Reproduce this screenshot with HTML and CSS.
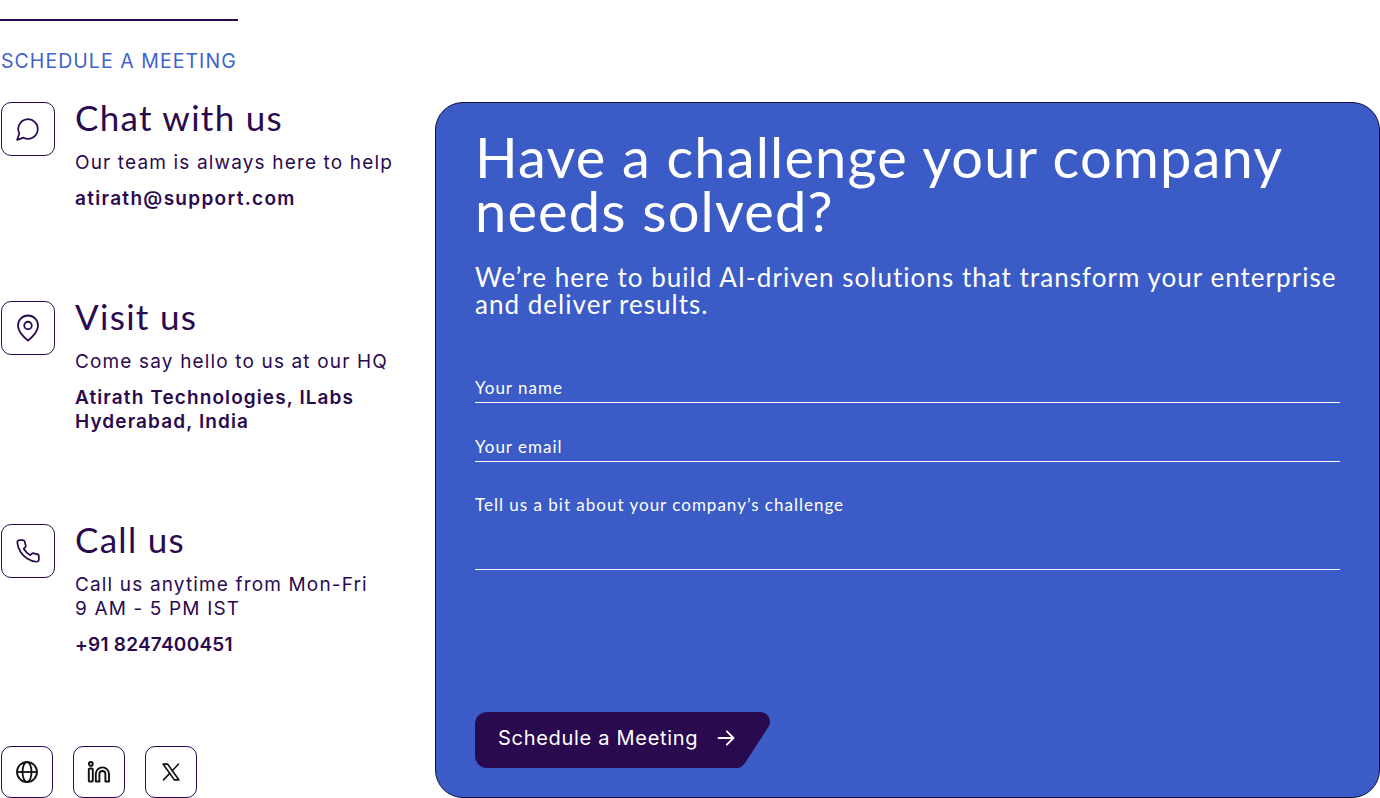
FILE: index.html

```html
<!DOCTYPE html>
<html lang="en">
<head>
  <meta charset="UTF-8">
  <title>Schedule a Meeting</title>
  <meta name="viewport" content="width=device-width, initial-scale=1.0">
  <link rel="stylesheet" href="styles.css">
</head>
<body>
  <div class="page">

    <!-- Kontaktspalte -->
    <aside class="contact">
      <div class="rule"></div>
      <div class="eyebrow">SCHEDULE A MEETING</div>

      <div class="contact-list">
        <div class="contact-row">
          <div class="icon-box">
            <svg width="26" height="26" viewBox="0 0 24 24" fill="none" stroke="#2a0a4f" stroke-width="1.6" stroke-linecap="round" stroke-linejoin="round"><path d="M7.9 20A9 9 0 1 0 4 16.1L2 22Z"/></svg>
          </div>
          <div class="contact-text">
            <h2>Chat with us</h2>
            <p>Our team is always here to help</p>
            <p class="strong email">atirath@support.com</p>
          </div>
        </div>

        <div class="contact-row">
          <div class="icon-box">
            <svg width="30" height="30" viewBox="0 0 24 24" fill="none" stroke="#2a0a4f" stroke-width="1.45" stroke-linecap="round" stroke-linejoin="round"><path d="M20 10c0 6-8 12-8 12s-8-6-8-12a8 8 0 0 1 16 0Z"/><circle cx="12" cy="10" r="3"/></svg>
          </div>
          <div class="contact-text">
            <h2>Visit us</h2>
            <p>Come say hello to us at our HQ</p>
            <p class="strong">Atirath Technologies, ILabs<br>Hyderabad, India</p>
          </div>
        </div>

        <div class="contact-row">
          <div class="icon-box">
            <svg width="26" height="26" viewBox="0 0 24 24" fill="none" stroke="#2a0a4f" stroke-width="1.6" stroke-linecap="round" stroke-linejoin="round"><path d="M22 16.92v3a2 2 0 0 1-2.18 2 19.79 19.79 0 0 1-8.63-3.07 19.5 19.5 0 0 1-6-6 19.79 19.79 0 0 1-3.07-8.67A2 2 0 0 1 4.11 2h3a2 2 0 0 1 2 1.72 12.84 12.84 0 0 0 .7 2.81 2 2 0 0 1-.45 2.11L8.09 9.91a16 16 0 0 0 6 6l1.27-1.27a2 2 0 0 1 2.11-.45 12.84 12.84 0 0 0 2.81.7A2 2 0 0 1 22 16.92z"/></svg>
          </div>
          <div class="contact-text">
            <h2>Call us</h2>
            <p>Call us anytime from Mon-Fri<br>9 AM - 5 PM IST</p>
            <p class="strong phone">+91 8247400451</p>
          </div>
        </div>
      </div>

      <div class="socials">
        <div class="social-box">
          <svg width="24" height="24" viewBox="0 0 24 24" fill="none" stroke="#111" stroke-width="1.8"><circle cx="12" cy="12" r="10"/><ellipse cx="12" cy="12" rx="4.5" ry="10"/><path d="M2 12h20"/></svg>
        </div>
        <div class="social-box">
          <svg width="24" height="24" viewBox="0 0 24 24" fill="none" stroke="#111" stroke-width="1.9" stroke-linejoin="round"><circle cx="3.8" cy="3.9" r="1.9"/><rect x="1.8" y="8.5" width="4" height="13" rx="1"/><path d="M8.8 21.5V14a6.6 6.6 0 0 1 13.2 0v7.5h-3.6V14a3 3 0 0 0-6 0v7.5z"/></svg>
        </div>
        <div class="social-box">
          <svg width="20" height="20" viewBox="0 0 24 24" fill="none" stroke="#111" stroke-width="1.9" stroke-linejoin="round"><path d="M2.5 2.5h5.4l13.6 19h-5.4z"/><path d="M21 2.5 13.5 10.6M10.5 13.6 3 21.5" stroke-linecap="round"/></svg>
        </div>
      </div>
    </aside>

    <!-- Formular -->
    <main class="panel">
      <h1>Have a challenge your company needs solved?</h1>
      <p class="lead">We’re here to build AI-driven solutions that transform your enterprise and deliver results.</p>

      <div class="form">
        <div class="field">Your name</div>
        <div class="field">Your email</div>
        <div class="field field-long">Tell us a bit about your company’s challenge</div>
      </div>

      <button class="btn">
        Schedule a Meeting
        <svg width="20" height="20" viewBox="0 0 24 24" fill="none" stroke="#fff" stroke-width="2.2" stroke-linecap="round" stroke-linejoin="round"><path d="M3 12h18M13 4l8 8-8 8"/></svg>
      </button>
    </main>
  </div>
</body>
</html>
```

FILE: styles.css

```css
body {
  font-family: Inter, "Open Sans", sans-serif;
  background: #ffffff;
  color: #2a0a4f;
  margin: 0;
  padding: 0;
}

.page {
  display: grid;
  grid-template-columns: 435px 1fr;
  width: 1380px;
  height: 798px;
  overflow: hidden;
}

.contact {
  display: flex;
  flex-direction: column;
  padding: 19px 0 0 1px;
}

.rule {
  width: 238px;
  height: 2px;
  margin-left: -1px;
  background: #2a0a4f;
}

.eyebrow {
  margin-top: 28px;
  font-size: 19.5px;
  line-height: 24px;
  color: #3f62cc;
  letter-spacing: 1.05px;
}

.contact-list {
  display: flex;
  flex-direction: column;
  gap: 90px;
  margin-top: 29px;
}

.contact-row {
  display: flex;
  gap: 20px;
}

.icon-box,
.social-box {
  display: flex;
  align-items: center;
  justify-content: center;
  flex: none;
  box-sizing: border-box;
  border: 1px solid #2a0a4f;
  border-radius: 10px;
}

.icon-box {
  width: 54px;
  height: 54px;
}

.social-box {
  width: 52px;
  height: 52px;
}

.contact-text h2 {
  margin: 0 0 19px;
  font-family: Lato, sans-serif;
  font-weight: 400;
  font-size: 35px;
  line-height: 30px;
  letter-spacing: 1.3px;
}

.contact-text p {
  margin: 12px 0 0;
  font-size: 19px;
  line-height: 24px;
  letter-spacing: 1.15px;
}

.contact-text .strong {
  font-weight: 600;
  letter-spacing: 1.1px;
}

.contact-text .email {
  letter-spacing: 1.3px;
}

.contact-text .phone {
  letter-spacing: 0.25px;
}

.socials {
  display: flex;
  gap: 20px;
  margin-top: 89px;
}

.panel {
  display: flex;
  flex-direction: column;
  align-items: flex-start;
  box-sizing: border-box;
  height: 696px;
  margin-top: 102px;
  padding: 27px 39px 29px 39px;
  background: #3b5bc6;
  border: 1px solid #15103a;
  border-radius: 28px;
  color: #ffffff;
}

.panel h1 {
  margin: 0;
  font-family: Lato, sans-serif;
  font-weight: 400;
  font-size: 56px;
  line-height: 54px;
  letter-spacing: 1.15px;
}

.lead {
  margin: 26px 0 0;
  font-family: Lato, sans-serif;
  font-size: 26px;
  line-height: 27px;
  letter-spacing: 1.03px;
}

.form {
  align-self: stretch;
  margin-top: 58px;
  font-family: Lato, sans-serif;
  font-size: 17px;
  letter-spacing: 1px;
}

.field {
  height: 26px;
  margin-top: 32px;
  line-height: 24px;
  border-bottom: 1px solid #ffffff;
}

.field:first-child {
  margin-top: 0;
}

.field-long {
  height: 76px;
  margin-top: 31px;
}

.btn {
  display: flex;
  align-items: center;
  gap: 18px;
  width: 295px;
  height: 56px;
  margin-top: auto;
  padding: 0 0 4px 23px;
  font-family: Inter, sans-serif;
  font-size: 20px;
  letter-spacing: 0.7px;
  color: #ffffff;
  background: #2a0a4f;
  border: none;
  cursor: pointer;
  clip-path: path("M12 0H285C293 0 297 8 294 14L270 51C268 54 265 56 262 56H12A12 12 0 0 1 0 44V12A12 12 0 0 1 12 0Z");
}
```
